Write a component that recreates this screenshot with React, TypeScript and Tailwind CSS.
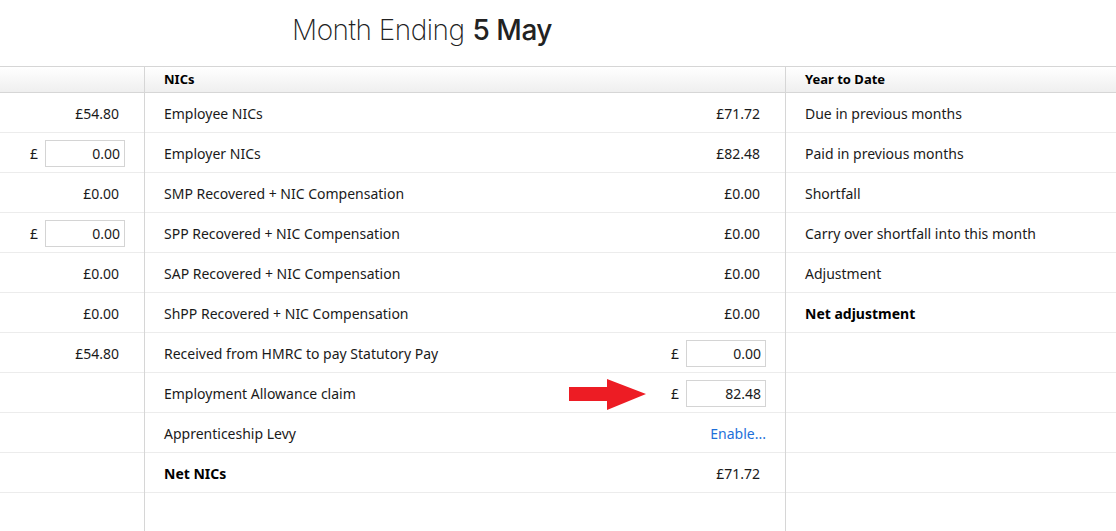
import React from "react";

type Cell =
  | { kind: "text"; value: string }
  | { kind: "input"; value: string }
  | { kind: "link"; value: string }
  | { kind: "none" };

interface Row {
  left: Cell;
  label: string;
  mid: Cell;
  right: string;
  bold?: boolean;
  rightBold?: boolean;
  arrow?: boolean;
}

const rows: Row[] = [
  { left: { kind: "text", value: "£54.80" }, label: "Employee NICs", mid: { kind: "text", value: "£71.72" }, right: "Due in previous months" },
  { left: { kind: "input", value: "0.00" }, label: "Employer NICs", mid: { kind: "text", value: "£82.48" }, right: "Paid in previous months" },
  { left: { kind: "text", value: "£0.00" }, label: "SMP Recovered + NIC Compensation", mid: { kind: "text", value: "£0.00" }, right: "Shortfall" },
  { left: { kind: "input", value: "0.00" }, label: "SPP Recovered + NIC Compensation", mid: { kind: "text", value: "£0.00" }, right: "Carry over shortfall into this month" },
  { left: { kind: "text", value: "£0.00" }, label: "SAP Recovered + NIC Compensation", mid: { kind: "text", value: "£0.00" }, right: "Adjustment" },
  { left: { kind: "text", value: "£0.00" }, label: "ShPP Recovered + NIC Compensation", mid: { kind: "text", value: "£0.00" }, right: "Net adjustment", rightBold: true },
  { left: { kind: "text", value: "£54.80" }, label: "Received from HMRC to pay Statutory Pay", mid: { kind: "input", value: "0.00" }, right: "" },
  { left: { kind: "none" }, label: "Employment Allowance claim", mid: { kind: "input", value: "82.48" }, right: "", arrow: true },
  { left: { kind: "none" }, label: "Apprenticeship Levy", mid: { kind: "link", value: "Enable..." }, right: "" },
  { left: { kind: "none" }, label: "Net NICs", mid: { kind: "text", value: "£71.72" }, right: "", bold: true },
];

function Value({ cell }: { cell: Cell }) {
  if (cell.kind === "none") return null;
  if (cell.kind === "link")
    return <span className="text-[#1e6fd9] -mr-[1px]">{cell.value}</span>;
  if (cell.kind === "input")
    return (
      <div className="flex items-center gap-[7px] -mr-[1px]">
        <span>£</span>
        <div className="w-[80px] h-[27px] border border-[#d4d4d4] bg-white flex items-center justify-end pr-[4px]">
          {cell.value}
        </div>
      </div>
    );
  return <span className="pr-[5px]">{cell.value}</span>;
}

function Arrow() {
  return (
    <svg width="78" height="32" viewBox="0 0 78 32" className="mr-[24px] mt-[3px]">
      <polygon points="0,8 38,8 38,0 77,15 38,31 38,22 0,22" fill="#ed1c24" />
    </svg>
  );
}

export default function App() {
  return (
    <div
      className="w-[1116px] h-[531px] bg-white text-[14px] text-[#1a1a1a] overflow-hidden flex flex-col"
      style={{ fontFamily: '"Noto Sans", "Open Sans", sans-serif' }}
    >
      <div
        className="h-[66px] flex items-center pl-[292px] pb-[6px] text-[28px] text-[#222]"
        style={{ fontFamily: 'Inter, "Liberation Sans", sans-serif' }}
      >
        <span className="font-extralight tracking-[-0.5px]">Month Ending</span>
        <span className="font-medium ml-[8px] tracking-[-0.5px]">5 May</span>
      </div>

      <div className="flex-1 flex">
        <div className="w-[145px] border-r border-[#d6d6d6] flex flex-col">
          <div className="h-[27px] border-y border-[#d6d6d6] bg-gradient-to-b from-white to-[#efefef]" />
          {rows.map((r, i) => (
            <div key={i} className="h-[40px] pt-[2px] border-b border-[#ececec] flex items-center justify-end pr-[20px]">
              <Value cell={r.left} />
            </div>
          ))}
        </div>

        <div className="w-[641px] border-r border-[#d6d6d6] flex flex-col">
          <div className="h-[27px] border-y border-[#d6d6d6] bg-gradient-to-b from-white to-[#efefef] flex items-center pl-[19px] pt-[1px] text-[13px] font-bold text-black">
            NICs
          </div>
          {rows.map((r, i) => (
            <div key={i} className="h-[40px] pt-[2px] border-b border-[#ececec] flex items-center pl-[19px] pr-[20px]">
              <span className={r.bold ? "font-bold text-black" : ""}>{r.label}</span>
              <div className="flex-1" />
              {r.arrow && <Arrow />}
              <Value cell={r.mid} />
            </div>
          ))}
        </div>

        <div className="flex-1 flex flex-col">
          <div className="h-[27px] border-y border-[#d6d6d6] bg-gradient-to-b from-white to-[#efefef] flex items-center pl-[19px] pt-[1px] text-[13px] font-bold text-black">
            Year to Date
          </div>
          {rows.map((r, i) => (
            <div key={i} className="h-[40px] pt-[2px] border-b border-[#ececec] flex items-center pl-[19px]">
              <span className={r.rightBold ? "font-bold text-black" : ""}>{r.right}</span>
            </div>
          ))}
        </div>
      </div>
    </div>
  );
}
